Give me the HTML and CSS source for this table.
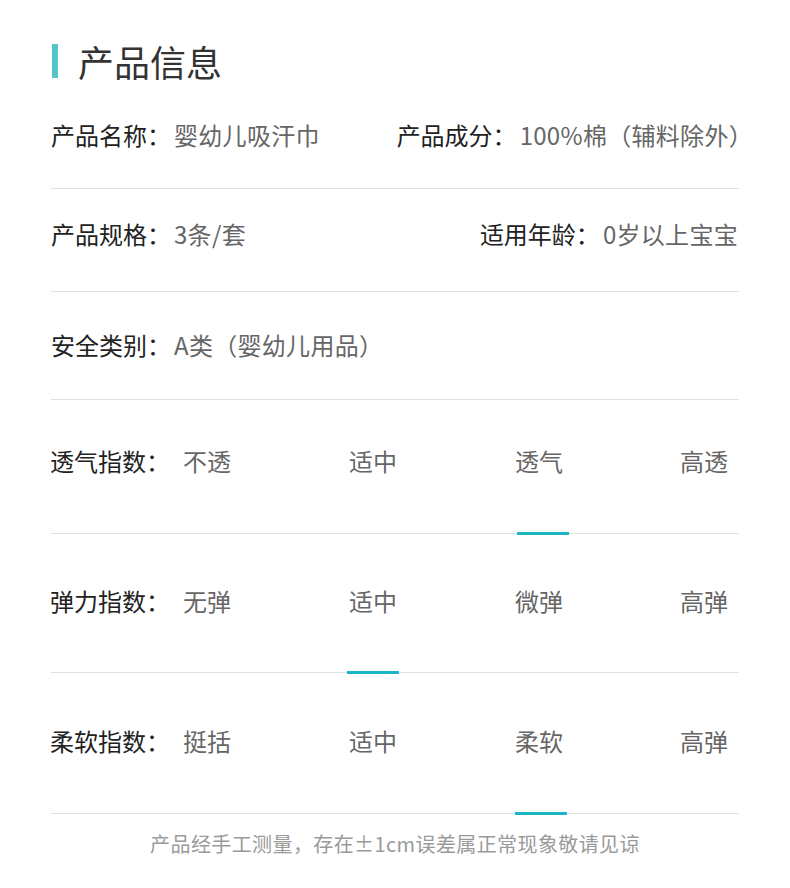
FILE: index.html
```html
<!DOCTYPE html>
<html lang="zh-CN">
<head>
<meta charset="utf-8">
<title>产品信息</title>
<link rel="stylesheet" href="styles.css">
</head>
<body>
<div class="page">
  <header class="head">
    <span class="head-bar"></span>
    <h1 class="head-title">产品信息</h1>
  </header>

  <div class="row row-1">
    <div class="item"><span class="label">产品名称：</span><span class="value">婴幼儿吸汗巾</span></div>
    <div class="item item-wide"><span class="label">产品成分：</span><span class="value">100%棉（辅料除外）</span></div>
  </div>
  <div class="row row-2">
    <div class="item"><span class="label">产品规格：</span><span class="value">3条/套</span></div>
    <div class="item item-end"><span class="label">适用年龄：</span><span class="value">0岁以上宝宝</span></div>
  </div>
  <div class="row row-3">
    <div class="item"><span class="label">安全类别：</span><span class="value">A类（婴幼儿用品）</span></div>
  </div>

  <div class="rate rate-1">
    <span class="label cell">透气指数：</span>
    <span class="opt cell">不透</span>
    <span class="opt cell">适中</span>
    <span class="opt cell active shift-r">透气</span>
    <span class="opt cell">高透</span>
  </div>
  <div class="rate rate-2">
    <span class="label cell">弹力指数：</span>
    <span class="opt cell">无弹</span>
    <span class="opt cell active">适中</span>
    <span class="opt cell">微弹</span>
    <span class="opt cell">高弹</span>
  </div>
  <div class="rate rate-3">
    <span class="label cell">柔软指数：</span>
    <span class="opt cell">挺括</span>
    <span class="opt cell">适中</span>
    <span class="opt cell active shift-0">柔软</span>
    <span class="opt cell">高弹</span>
  </div>

  <p class="note">产品经手工测量，存在±1cm误差属正常现象敬请见谅</p>
</div>
</body>
</html>
```
FILE: styles.css
```css
* { box-sizing: border-box; }
html, body { margin: 0; padding: 0; background: #fff; }
body {
  font-family: "Noto Sans CJK SC", "Noto Sans", sans-serif;
  color: #222;
}
.page {
  width: 688px;
  margin: 0 auto;
}
.head {
  display: flex;
  align-items: center;
  padding-top: 44px;
  height: 78px;
}
.head-bar {
  width: 6px;
  height: 34px;
  background: #55c6c6;
  margin-left: 1px;
  margin-right: 20px;
}
.head-title {
  margin: 0;
  font-size: 36px;
  font-weight: 400;
  line-height: 34px;
  color: #333;
}
.row {
  display: flex;
  justify-content: space-between;
  border-bottom: 1px solid #e0e0e0;
  font-size: 24px;
  line-height: 34px;
}
.row-1 { padding: 40px 0 36px; }
.row-2 { padding: 28px 0 40px; }
.row-3 { padding: 36px 0 37px; }
.row .label { margin-right: 3px; }
.item-wide { margin-right: -14px; }
.item-end { margin-right: 1px; }
.label { color: #222; }
.value { color: #666; letter-spacing: 0.3px; }

.rate {
  display: grid;
  grid-template-columns: 132px 166px 166px 165px 1fr;
  border-bottom: 1px solid #e0e0e0;
  font-size: 24px;
  line-height: 34px;
}
.rate-1 .cell { padding: 44px 0 55px; }
.rate-2 .cell { padding: 50px 0 54px; }
.rate-3 .cell { padding: 51px 0 55px; }
.opt { color: #666; position: relative; }
.rate .label { margin-left: -1px; }
.active::after {
  content: "";
  position: absolute;
  left: -2px;
  bottom: -2px;
  width: 52px;
  height: 3px;
  background: #1bb6c3;
}
.shift-r::after { left: 2px; }
.shift-0::after { left: 0; }

.note {
  margin: 0;
  padding-top: 16px;
  text-align: center;
  font-size: 20px;
  line-height: 28px;
  letter-spacing: 0.4px;
  color: #9a9a9a;
}
```
